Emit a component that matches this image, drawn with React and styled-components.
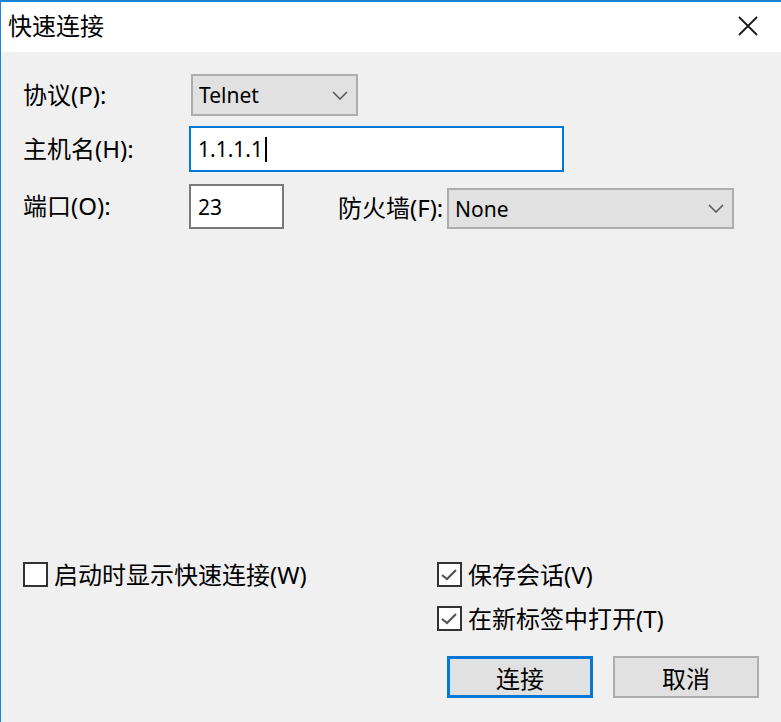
import React from "react";
import styled, { createGlobalStyle } from "styled-components";

const GlobalStyle = createGlobalStyle`
  html, body {
    margin: 0;
    padding: 0;
    background: #f0f0f0;
  }
  * { box-sizing: border-box; }
`;

const FONT = `"Noto Sans", "Noto Sans CJK SC", sans-serif`;

const Window = styled.div`
  width: 781px;
  height: 722px;
  display: flex;
  flex-direction: column;
  border-top: 2px solid #1883d7;
  border-left: 1px solid #1883d7;
  background: #f0f0f0;
  font-family: ${FONT};
  color: #000;
`;

const TitleBar = styled.div`
  height: 50px;
  background: #fff;
  display: flex;
  align-items: center;
  justify-content: space-between;
  padding: 0 22px 0 7px;
`;

const Title = styled.div`
  font-size: 24px;
  line-height: 1;
  margin-top: -2px;
`;

const CloseButton = styled.button`
  width: 22px;
  height: 22px;
  padding: 0;
  border: 0;
  background: transparent;
  display: flex;
  align-items: center;
  justify-content: center;
  margin-top: -3px;
`;

const Body = styled.div`
  flex: 1;
  display: flex;
  flex-direction: column;
  justify-content: space-between;
  padding: 22px 0 24px 22px;
`;

const Form = styled.div`
  display: flex;
  flex-direction: column;
`;

const Row = styled.div`
  display: flex;
  align-items: center;
  margin-top: ${(p) => p.$gap || 0}px;
`;

const Label = styled.label`
  font-size: 24px;
  line-height: 1.2;
  width: ${(p) => (p.$width ? `${p.$width}px` : "auto")};
  margin-left: ${(p) => p.$indent || 0}px;
  margin-top: ${(p) => p.$shift || 0}px;
  flex-shrink: 0;
  white-space: nowrap;
`;

const Select = styled.div`
  width: ${(p) => p.$width}px;
  height: ${(p) => p.$height}px;
  margin-left: ${(p) => p.$offset || 0}px;
  margin-top: ${(p) => p.$shift || 0}px;
  background: #e1e1e1;
  border: 2px solid #adadad;
  display: flex;
  align-items: center;
  justify-content: space-between;
  padding: 0 8px 0 6px;
  font-size: 21px;
`;

const Input = styled.div`
  width: ${(p) => p.$width}px;
  height: ${(p) => p.$height}px;
  background: #fff;
  border: 2px solid ${(p) => (p.$focused ? "#0078d7" : "#7a7a7a")};
  display: flex;
  align-items: center;
  padding-left: 7px;
  font-size: 21px;
`;

const Caret = styled.span`
  display: inline-block;
  width: 2px;
  height: 25px;
  background: #000;
  margin-left: 2px;
`;

const Bottom = styled.div`
  display: flex;
`;

const LeftCol = styled.div`
  width: 414px;
`;

const RightCol = styled.div`
  display: flex;
  flex-direction: column;
`;

const CheckRow = styled.div`
  display: flex;
  align-items: center;
  gap: 6px;
  height: 25px;
  margin-bottom: ${(p) => p.$after || 0}px;
`;

const Box = styled.span`
  width: 25px;
  height: 25px;
  border: 2px solid #333;
  background: #fff;
  display: flex;
  align-items: center;
  justify-content: center;
  flex-shrink: 0;
`;

const CheckText = styled.span`
  font-size: 24px;
  line-height: 1;
  white-space: nowrap;
`;

const Buttons = styled.div`
  display: flex;
  gap: 20px;
  margin-left: 10px;
`;

const Button = styled.button`
  width: 146px;
  height: 42px;
  background: #e1e1e1;
  border: ${(p) => (p.$primary ? "3px solid #0078d7" : "2px solid #adadad")};
  font-family: ${FONT};
  font-size: 24px;
  color: #000;
  padding: 0;
  display: flex;
  align-items: center;
  justify-content: center;
`;

function Chevron() {
  return (
    <svg width="16" height="9" viewBox="0 0 16 9">
      <polyline points="1,1 8,8 15,1" fill="none" stroke="#555" strokeWidth="1.5" />
    </svg>
  );
}

function Check({ checked, children, after }) {
  return (
    <CheckRow $after={after}>
      <Box>
        {checked && (
          <svg width="21" height="21" viewBox="0 0 21 21">
            <polyline points="3,11 8,15 17,6" fill="none" stroke="#555" strokeWidth="2.2" />
          </svg>
        )}
      </Box>
      <CheckText>{children}</CheckText>
    </CheckRow>
  );
}

export default function App() {
  return (
    <>
      <GlobalStyle />
      <Window>
        <TitleBar>
          <Title>快速连接</Title>
          <CloseButton aria-label="close">
            <svg width="20" height="20" viewBox="0 0 20 20">
              <path d="M1 1 L19 19 M19 1 L1 19" stroke="#1a1a1a" strokeWidth="1.8" />
            </svg>
          </CloseButton>
        </TitleBar>
        <Body>
          <Form>
            <Row>
              <Label $width={166}>协议(P):</Label>
              <Select $width={167} $height={42} $offset={2}>
                <span>Telnet</span>
                <Chevron />
              </Select>
            </Row>
            <Row $gap={10}>
              <Label $width={166}>主机名(H):</Label>
              <Input $width={375} $height={46} $focused>
                1.1.1.1
                <Caret />
              </Input>
            </Row>
            <Row $gap={12}>
              <Label $width={166}>端口(O):</Label>
              <Input $width={95} $height={45}>23</Input>
              <Label $width={109} $indent={54} $shift={4}>防火墙(F):</Label>
              <Select $width={287} $height={41} $shift={4}>
                <span>None</span>
                <Chevron />
              </Select>
            </Row>
          </Form>
          <Bottom>
            <LeftCol>
              <Check>启动时显示快速连接(W)</Check>
            </LeftCol>
            <RightCol>
              <Check checked after={19}>保存会话(V)</Check>
              <Check checked after={25}>在新标签中打开(T)</Check>
              <Buttons>
                <Button $primary>连接</Button>
                <Button>取消</Button>
              </Buttons>
            </RightCol>
          </Bottom>
        </Body>
      </Window>
    </>
  );
}
